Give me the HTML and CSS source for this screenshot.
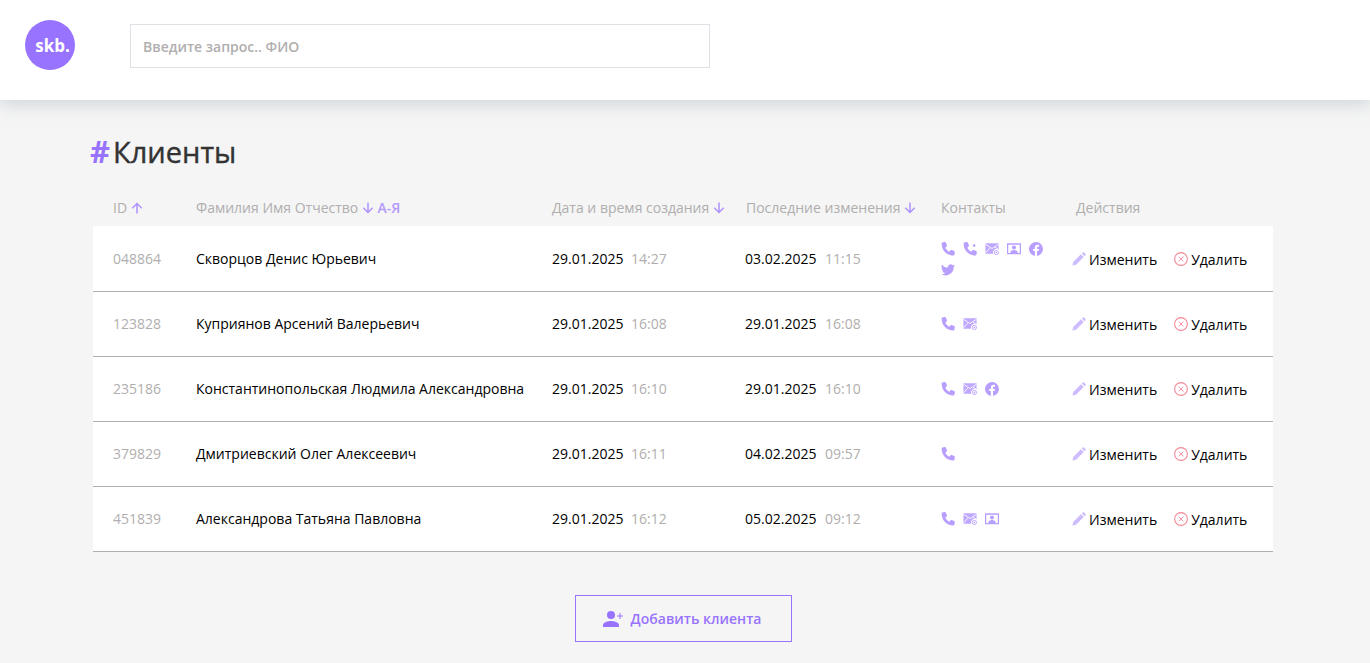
FILE: index.html
```html
<!DOCTYPE html>
<html lang="ru">
<head>
    <meta charset="UTF-8">
    <meta name="viewport" content="width=device-width, initial-scale=1.0">
    <title>Клиенты</title>
    <link rel="stylesheet" href="styles.css">
</head>
<body>
    <svg class="defs" width="0" height="0">
        <symbol id="i-phone" viewBox="0 0 16 16"><path d="M1.500 .5 4.300 .1c.5-.1 1 .2 1.200 .6l1.300 3c.2 .4 .1 .9-.3 1.200L5 6.500c.8 1.800 2.500 3.500 4.500 4.500l1.400-1.500c.3-.4 .8-.5 1.200-.3l3 1.200c.5 .2 .8 .7 .7 1.200l-.5 2.900c-.1 .5-.5 .9-1 .9C6.300 15.400 .7 9.600 .7 1.500c0-.5 .3-.9 .8-1z"/></symbol>
        <symbol id="i-phone2" viewBox="0 0 16 16"><path d="M1.500 .5 4.300 .1c.5-.1 1 .2 1.200 .6l1.300 3c.2 .4 .1 .9-.3 1.200L5 6.500c.8 1.800 2.500 3.500 4.500 4.500l1.400-1.500c.3-.4 .8-.5 1.200-.3l3 1.200c.5 .2 .8 .7 .7 1.200l-.5 2.900c-.1 .5-.5 .9-1 .9C6.300 15.400 .7 9.600 .7 1.500c0-.5 .3-.9 .8-1z"/><circle cx="12.700" cy="4" r="1.500"/></symbol>
        <symbol id="i-mail" viewBox="0 0 16 14"><path d="M.5 .5h15v7a4.300 4.300 0 0 0-6.300 5H.5z" fill-opacity=".9"/><path d="M.5 1.500 8 6.500l7.500-5M.5 11.500l5-5.500M15.500 7.500l-4-2.500" fill="none" stroke="#fff" stroke-width="1"/><circle cx="13" cy="11" r="2.400" fill="none" stroke="currentColor" stroke-width="1"/><circle cx="13" cy="11" r=".9"/></symbol>
        <symbol id="i-card" viewBox="0 0 16 14"><path fill-rule="evenodd" d="M0 .5h16V13H0zM1.400 2v9.500h13.200V2z"/><circle cx="8" cy="5.200" r="2.300"/><path d="M3.700 11.500c0-2.400 2-3.500 4.300-3.500s4.300 1.100 4.300 3.500z"/></symbol>
        <symbol id="i-fb" viewBox="0 0 16 16"><path d="M16 8a8 8 0 1 0-9.300 7.900v-5.600H4.700V8h2V6.200c0-2 1.200-3.100 3-3.100.9 0 1.800.2 1.800.2v2h-1c-1 0-1.300.6-1.300 1.200V8h2.200l-.4 2.300H9.200v5.600A8 8 0 0 0 16 8z"/></symbol>
        <symbol id="i-tw" viewBox="0 0 16 14"><path d="M16 2c-.6.3-1.200.4-1.900.5.700-.4 1.200-1 1.400-1.800-.6.400-1.300.7-2.100.8A3.300 3.300 0 0 0 7.800 4.500 9.300 9.300 0 0 1 1.100.9a3.300 3.300 0 0 0 1 4.400c-.5 0-1-.2-1.500-.4 0 1.600 1.100 2.900 2.600 3.200-.5.100-1 .1-1.500 0 .4 1.300 1.600 2.200 3.100 2.300A6.600 6.600 0 0 1 0 11.700 9.300 9.300 0 0 0 14.400 3.400c.6-.4 1.200-.9 1.600-1.400z"/></symbol>
        <symbol id="i-edit" viewBox="0 0 16 16"><path d="M.5 15.500l.9-4.100L10.200 2.600l3.200 3.200-8.800 8.800zM11.200 1.600 12.400.5c.4-.4 1-.4 1.400 0l1.700 1.700c.4.4.4 1 0 1.400l-1.100 1.200z"/></symbol>
        <symbol id="i-del" viewBox="0 0 16 16"><circle cx="8" cy="8" r="7.300" fill="none" stroke="currentColor" stroke-width="1.200"/><path d="M5.300 5.300l5.400 5.400M10.700 5.300l-5.400 5.400" fill="none" stroke="currentColor" stroke-width="1"/></symbol>
        <symbol id="i-up" viewBox="0 0 12 12"><path d="M6 11.500V1.500M1.300 6.200 6 1.500l4.700 4.700" fill="none" stroke="currentColor" stroke-width="1.500"/></symbol>
        <symbol id="i-down" viewBox="0 0 12 12"><path d="M6 .5v10M1.300 5.800 6 10.500l4.700-4.700" fill="none" stroke="currentColor" stroke-width="1.500"/></symbol>
    </svg>

    <header class="header">
        <div class="logo">skb.</div>
        <input class="search" type="text" placeholder="Введите запрос.. ФИО">
    </header>

    <main class="content">
        <h1 class="title"><span class="hash">#</span>Клиенты</h1>

        <div class="row row-head">
            <div class="head-id">ID <svg class="arrow"><use href="#i-up"/></svg></div>
            <div>Фамилия Имя Отчество <svg class="arrow"><use href="#i-down"/></svg> <b class="az">А-Я</b></div>
            <div>Дата и время создания <svg class="arrow"><use href="#i-down"/></svg></div>
            <div class="head-mod">Последние изменения <svg class="arrow"><use href="#i-down"/></svg></div>
            <div>Контакты</div>
            <div class="head-act">Действия</div>
        </div>

        <div class="row client">
            <div class="id">048864</div>
            <div class="name">Скворцов Денис Юрьевич</div>
            <div>29.01.2025 <span class="time">14:27</span></div>
            <div class="changed">03.02.2025 <span class="time">11:15</span></div>
            <div class="contacts">
                <svg class="ico"><use href="#i-phone"/></svg>
                <svg class="ico"><use href="#i-phone2"/></svg>
                <svg class="ico"><use href="#i-mail"/></svg>
                <svg class="ico"><use href="#i-card"/></svg>
                <svg class="ico"><use href="#i-fb"/></svg>
                <svg class="ico"><use href="#i-tw"/></svg>
            </div>
            <div class="actions">
                <span class="act"><svg class="ico-edit"><use href="#i-edit"/></svg>Изменить</span>
                <span class="act"><svg class="ico-del"><use href="#i-del"/></svg>Удалить</span>
            </div>
        </div>

        <div class="row client">
            <div class="id">123828</div>
            <div class="name">Куприянов Арсений Валерьевич</div>
            <div>29.01.2025 <span class="time">16:08</span></div>
            <div class="changed">29.01.2025 <span class="time">16:08</span></div>
            <div class="contacts">
                <svg class="ico"><use href="#i-phone"/></svg>
                <svg class="ico"><use href="#i-mail"/></svg>
            </div>
            <div class="actions">
                <span class="act"><svg class="ico-edit"><use href="#i-edit"/></svg>Изменить</span>
                <span class="act"><svg class="ico-del"><use href="#i-del"/></svg>Удалить</span>
            </div>
        </div>

        <div class="row client">
            <div class="id">235186</div>
            <div class="name">Константинопольская Людмила Александровна</div>
            <div>29.01.2025 <span class="time">16:10</span></div>
            <div class="changed">29.01.2025 <span class="time">16:10</span></div>
            <div class="contacts">
                <svg class="ico"><use href="#i-phone"/></svg>
                <svg class="ico"><use href="#i-mail"/></svg>
                <svg class="ico"><use href="#i-fb"/></svg>
            </div>
            <div class="actions">
                <span class="act"><svg class="ico-edit"><use href="#i-edit"/></svg>Изменить</span>
                <span class="act"><svg class="ico-del"><use href="#i-del"/></svg>Удалить</span>
            </div>
        </div>

        <div class="row client">
            <div class="id">379829</div>
            <div class="name">Дмитриевский Олег Алексеевич</div>
            <div>29.01.2025 <span class="time">16:11</span></div>
            <div class="changed">04.02.2025 <span class="time">09:57</span></div>
            <div class="contacts">
                <svg class="ico"><use href="#i-phone"/></svg>
            </div>
            <div class="actions">
                <span class="act"><svg class="ico-edit"><use href="#i-edit"/></svg>Изменить</span>
                <span class="act"><svg class="ico-del"><use href="#i-del"/></svg>Удалить</span>
            </div>
        </div>

        <div class="row client">
            <div class="id">451839</div>
            <div class="name">Александрова Татьяна Павловна</div>
            <div>29.01.2025 <span class="time">16:12</span></div>
            <div class="changed">05.02.2025 <span class="time">09:12</span></div>
            <div class="contacts">
                <svg class="ico"><use href="#i-phone"/></svg>
                <svg class="ico"><use href="#i-mail"/></svg>
                <svg class="ico"><use href="#i-card"/></svg>
            </div>
            <div class="actions">
                <span class="act"><svg class="ico-edit"><use href="#i-edit"/></svg>Изменить</span>
                <span class="act"><svg class="ico-del"><use href="#i-del"/></svg>Удалить</span>
            </div>
        </div>

        <div class="add-wrap">
            <button class="add-btn">
                <svg class="ico-add" viewBox="0 0 22 16"><circle cx="9" cy="4" r="4"/><path d="M1 16v-2c0-2.700 5.300-4 8-4s8 1.300 8 4v2z"/><path d="M15 5h6M18 2v6" fill="none" stroke="currentColor" stroke-width="1"/></svg>
                Добавить клиента
            </button>
        </div>
    </main>
</body>
</html>
```

FILE: styles.css
```css
* {
    box-sizing: border-box;
}
html, body {
    height: 100%;
}
body {
    margin: 0;
    font-family: "Open Sans", Arial, sans-serif;
    background-color: #f5f5f5;
    color: #000;
    overflow: hidden;
}
.defs {
    position: absolute;
}
.header {
    display: flex;
    align-items: flex-start;
    height: 100px;
    padding: 20px 25px 0;
    background-color: #fff;
    box-shadow: 0 4px 16px rgba(176, 190, 197, 0.6);
}
.logo {
    display: flex;
    align-items: center;
    justify-content: center;
    width: 50px;
    height: 50px;
    margin-right: 55px;
    padding-left: 5px;
    border-radius: 50%;
    background-color: #9873ff;
    color: #fff;
    font-size: 17px;
    font-weight: 700;
}
.search {
    width: 580px;
    height: 44px;
    margin-top: 4px;
    padding: 0 12px;
    border: 1px solid #dfe1e6;
    background: #fff;
    font-family: inherit;
    font-size: 14px;
    font-weight: 600;
}
.search::placeholder {
    color: #b0aeae;
    opacity: 1;
}
.content {
    padding: 31px 97px 0 93px;
}
.title {
    display: flex;
    align-items: baseline;
    height: 40px;
    margin: 0 0 0 -3px;
    font-size: 29px;
    font-weight: 400;
    line-height: 40px;
    color: #333;
    -webkit-text-stroke: 0.4px #333;
}
.hash {
    margin-right: 3px;
    color: #9873ff;
    font-size: 31px;
    font-weight: 700;
    -webkit-text-stroke: 0;
}
.row {
    display: grid;
    grid-template-columns: 103px 356px 193px 196px 131px 1fr;
    align-items: center;
    font-size: 14px;
}
.row-head {
    height: 55px;
    padding-top: 17px;
    color: #b0aeae;
}
.row-head > div:first-child,
.client > div:first-child {
    padding-left: 20px;
}
.head-mod {
    padding-left: 1px;
}
.head-act {
    padding-left: 4px;
}
.arrow {
    width: 12px;
    height: 12px;
    color: #9873ff;
    opacity: 0.75;
    vertical-align: -1px;
}
.az {
    color: #9873ff;
    font-size: 14px;
    font-weight: 600;
    opacity: 0.7;
}
.client {
    height: 65px;
    padding-bottom: 2px;
    background-color: #fff;
    border-bottom: 1px solid #b0aeae;
}
/* first row is a pixel taller, its contacts wrap */
.row-head + .client {
    height: 66px;
    padding-bottom: 1px;
}
.id, .time {
    color: #b0aeae;
}
.time {
    margin-left: 4px;
}
.changed .time {
    margin-left: 5px;
}
.contacts {
    display: flex;
    flex-wrap: wrap;
    gap: 7px 8px;
    max-width: 104px;
    margin-top: 2px;
    color: #b89eff;
    fill: #b89eff;
}
.ico {
    display: block;
    width: 14px;
    height: 14px;
}
.actions {
    display: flex;
    gap: 17px;
    margin-top: 2px;
}
.act {
    display: flex;
    align-items: center;
    gap: 3px;
}
.ico-edit {
    width: 14px;
    height: 14px;
    fill: #cdbcff;
}
.ico-del {
    width: 14px;
    height: 14px;
    color: #f06a7d;
    opacity: 0.8;
}
.add-wrap {
    display: flex;
    justify-content: center;
    margin-top: 43px;
    padding-left: 1px;
}
.add-btn {
    display: flex;
    align-items: center;
    gap: 7px;
    width: 217px;
    height: 47px;
    justify-content: center;
    padding: 0 4px 0 0;
    background: none;
    border: 1px solid #9873ff;
    color: #9873ff;
    font-family: inherit;
    font-size: 14px;
    font-weight: 600;
}
.ico-add {
    width: 22px;
    height: 16px;
    fill: #9873ff;
}
```
